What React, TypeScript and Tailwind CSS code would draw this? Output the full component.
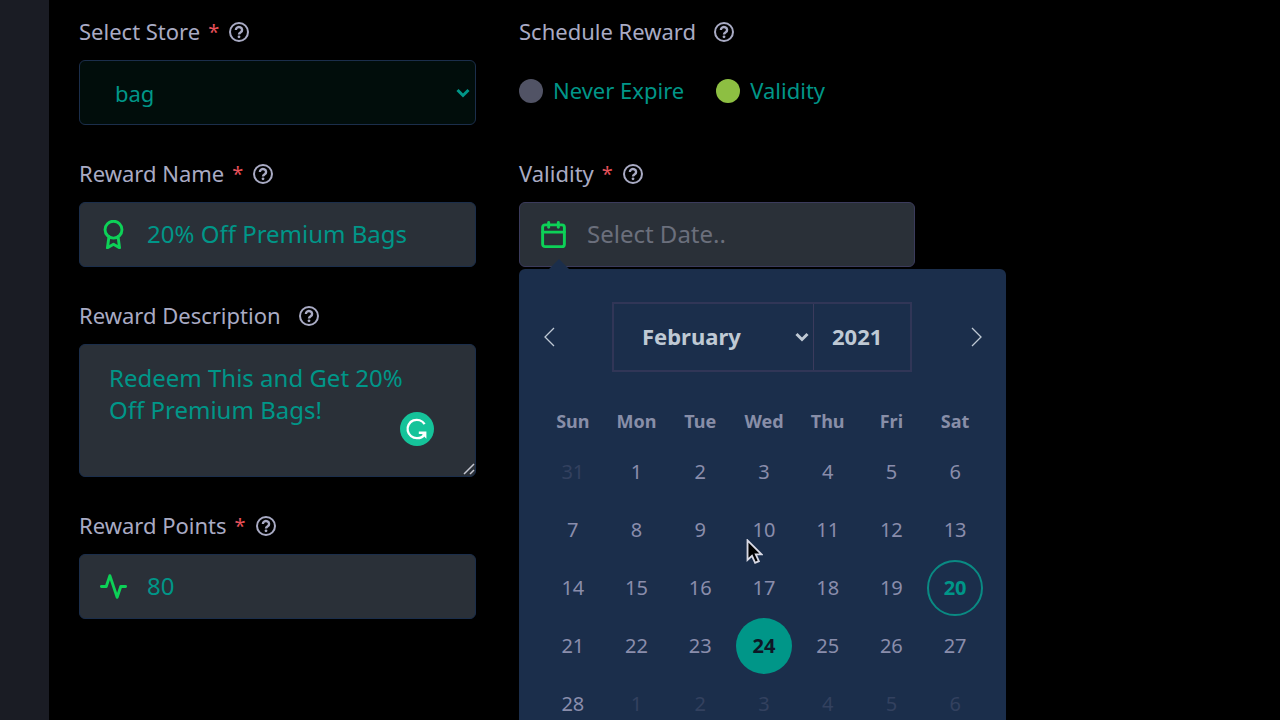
import { useState } from 'react';
import type { ReactNode } from 'react';
import { FiActivity, FiAward, FiCalendar } from 'react-icons/fi';

const months = [
  'January', 'February', 'March', 'April', 'May', 'June',
  'July', 'August', 'September', 'October', 'November', 'December',
];
const weekdays = ['Sun', 'Mon', 'Tue', 'Wed', 'Thu', 'Fri', 'Sat'];

const TODAY = new Date(2021, 1, 20).getTime();

function buildWeeks(year: number, month: number) {
  const offset = new Date(year, month, 1).getDay();
  const days = new Date(year, month + 1, 0).getDate();
  return Array.from({ length: Math.ceil((offset + days) / 7) }, (_, w) =>
    Array.from({ length: 7 }, (_, d) => new Date(year, month, 1 - offset + w * 7 + d))
  );
}

interface FieldLabelProps {
  htmlFor?: string;
  required?: boolean;
  children: ReactNode;
}

function HelpIcon() {
  return (
    <svg viewBox="0 0 24 24" fill="none" stroke="currentColor" className="size-6">
      <circle cx="12" cy="12" r="9" strokeWidth="2" />
      <path d="M8.9 10a3.1 2.8 0 1 1 4.8 2.2c-1.1.7-1.7 1.1-1.7 2.4" strokeWidth="2.4" />
      <circle cx="12" cy="16.8" r="1.4" fill="currentColor" stroke="none" />
    </svg>
  );
}

function FieldLabel({ htmlFor, required, children }: FieldLabelProps) {
  return (
    <div className="mb-3.5 flex h-7 items-center text-[22px] leading-7 text-[#a9abc4]">
      <label htmlFor={htmlFor} className={required ? 'mr-2 pb-0.5' : 'mr-4 pb-0.5'}>{children}</label>
      {required && <span className="mr-2 text-xl text-[#e7515a]">*</span>}
      <HelpIcon />
    </div>
  );
}

function Chevron({ className }: { className: string }) {
  return (
    <svg viewBox="0 0 14 10" fill="none" stroke="currentColor" strokeWidth="3" className={className}>
      <path d="M1.5 2 7 7.5 12.5 2" />
    </svg>
  );
}

function DatePicker() {
  const [year, setYear] = useState(2021);
  const [month, setMonth] = useState(1);
  const [selected, setSelected] = useState(new Date(2021, 1, 24).getTime());

  const move = (step: number) => {
    const next = new Date(year, month + step, 1);
    setYear(next.getFullYear());
    setMonth(next.getMonth());
  };

  const dayClass = (day: Date) => {
    if (day.getTime() === selected) return 'bg-[#009688] font-bold text-[#0e1726]';
    if (day.getTime() === TODAY) return 'border-2 border-[#0a8a83] font-bold text-[#009688]';
    if (day.getMonth() !== month) return 'text-[#33415f]';
    return 'text-[#8a8dab]';
  };

  // 28 February starts the last row, five rows in total
  const weeks = buildWeeks(year, month);

  return (
    <div className="absolute top-full left-0 z-10 mt-0.5 w-[487px] rounded-md bg-[#1b2e4b] pt-[33px] pr-[19px] pb-5 pl-[22px]">
      <span className="absolute -top-2.5 left-7 border-x-12 border-b-12 border-x-transparent border-b-[#1b2e4b]" />

      <div className="flex items-center justify-between pr-1">
        <button type="button" aria-label="Previous month" onClick={() => move(-1)} className="text-[#bfc9d4]">
          <svg viewBox="0 0 18 20" fill="none" stroke="currentColor" className="h-5 w-[18px]">
            <path d="M13 1 4 10l9 9" strokeWidth="1.3" />
          </svg>
        </button>

        <div className="flex h-[70px] border-2 border-[#3b3b5c]/70 text-[22px] font-bold text-[#bfc9d4]">
          <div className="relative">
            <select
              aria-label="Month"
              value={month}
              onChange={(e) => setMonth(Number(e.target.value))}
              className="h-full w-[199px] appearance-none bg-transparent pb-0.5 pl-7"
            >
              {months.map((name, i) => (
                <option key={name} value={i}>{name}</option>
              ))}
            </select>
            <Chevron className="pointer-events-none absolute top-7 right-1 h-2.5 w-3.5" />
          </div>
          <input
            aria-label="Year"
            value={year}
            onChange={(e) => setYear(Number(e.target.value) || 0)}
            className="w-[97px] border-l border-[#3b3b5c] bg-transparent pb-0.5 pl-[18px]"
          />
        </div>

        <button type="button" aria-label="Next month" onClick={() => move(1)} className="text-[#bfc9d4]">
          <svg viewBox="0 0 18 20" fill="none" stroke="currentColor" className="h-5 w-[18px]">
            <path d="m7 1 9 9-9 9" strokeWidth="1.3" />
          </svg>
        </button>
      </div>

      <table className="mt-[27px] w-full table-fixed text-center">
        <thead>
          <tr className="h-11 text-lg text-[#888ea8]">
            {weekdays.map((name) => (
              <th key={name} className="p-0 font-bold">{name}</th>
            ))}
          </tr>
        </thead>
        <tbody>
          {weeks.map((week) => (
            <tr key={week[0].getTime()} className="h-[58px] text-xl">
              {week.map((day) => (
                <td key={day.getTime()} className="p-0">
                  <button
                    type="button"
                    onClick={() => setSelected(day.getTime())}
                    className={`mx-auto flex size-14 items-center justify-center rounded-full leading-7 ${dayClass(day)}`}
                  >
                    {day.getDate()}
                  </button>
                </td>
              ))}
            </tr>
          ))}
        </tbody>
      </table>

      {/* mouse pointer */}
      <svg viewBox="0 0 18 28" className="pointer-events-none absolute top-[270px] left-[227px] h-[26px] w-[17px]">
        <path d="M1.5 1.5v21l4.8-4.4 3.4 7.6 4-1.8-3.3-7.4h6.2z" fill="#000" stroke="#d8d9e4" strokeWidth="2" />
      </svg>
    </div>
  );
}

export default function App() {
  const [name, setName] = useState('20% Off Premium Bags');
  const [description, setDescription] = useState('Redeem This and Get 20% Off Premium Bags!');
  const [points, setPoints] = useState('80');
  const [schedule, setSchedule] = useState('validity');

  const field = 'w-full rounded-md border border-[#1b2e4b] bg-[#2a3038] text-2xl text-[#009688] outline-none';
  const fieldIcon = 'absolute top-[18px] left-5 size-[29px] stroke-[2.4] text-[#0dd157]';
  const radio = 'size-6 appearance-none rounded-full bg-[#515365] checked:bg-[#8dbf42]';

  return (
    <div className="flex h-screen overflow-hidden bg-black font-['Noto_Sans',sans-serif]">
      <aside className="w-[49px] shrink-0 bg-[#1a1c24]" />

      <form className="flex flex-1 gap-[43px] pt-4.5 pr-8 pl-[30px]">
        <div className="flex max-w-[397px] flex-1 flex-col gap-[35px]">
          <div>
            <FieldLabel htmlFor="store" required>Select Store</FieldLabel>
            <div className="relative">
              <select
                id="store"
                className="h-[65px] w-full appearance-none rounded-md border border-[#1b2e4b] bg-[#010d0b] pt-0.5 pl-[35px] text-[22px] text-[#009688]"
              >
                <option>bag</option>
              </select>
              <Chevron className="pointer-events-none absolute top-7 right-1.5 h-2.5 w-3.5 text-[#009688]" />
            </div>
          </div>

          <div>
            <FieldLabel htmlFor="name" required>Reward Name</FieldLabel>
            <div className="relative">
              <FiAward className={fieldIcon} />
              <input
                id="name"
                value={name}
                onChange={(e) => setName(e.target.value)}
                className={`${field} h-[65px] pb-0.5 pl-[67px]`}
              />
            </div>
          </div>

          <div>
            <FieldLabel htmlFor="description">Reward Description</FieldLabel>
            <div className="relative">
              <textarea
                id="description"
                value={description}
                onChange={(e) => setDescription(e.target.value)}
                className={`${field} block h-[133px] resize-none py-[17px] pr-12 pl-[29px] leading-8`}
              />
              <svg viewBox="0 0 34 34" className="absolute right-[42px] bottom-[31px] size-[34px]">
                <circle cx="17" cy="17" r="17" fill="#15c39a" />
                <path
                  d="M24.6 12.2A9.2 9.2 0 1 0 17 26.2C20.4 26.2 23.4 24.6 25 21.6"
                  fill="none"
                  stroke="#fff"
                  strokeWidth="2.3"
                />
                <path d="M18.8 19.6h7.6v7.2l-2.4-2.6-2-2.3h-3.2z" fill="#fff" />
              </svg>
              <svg
                viewBox="0 0 12 12"
                stroke="#c4c6d0"
                strokeWidth="1.5"
                className="pointer-events-none absolute right-px bottom-0.5 size-3"
              >
                <path d="M1 11 11 1M7 11l4-4" />
              </svg>
            </div>
          </div>

          <div>
            <FieldLabel htmlFor="points" required>Reward Points</FieldLabel>
            <div className="relative">
              <FiActivity className={fieldIcon} />
              <input
                id="points"
                value={points}
                onChange={(e) => setPoints(e.target.value)}
                className={`${field} h-[65px] pb-0.5 pl-[67px]`}
              />
            </div>
          </div>
        </div>

        <div className="flex max-w-[396px] flex-1 flex-col gap-[35px]">
          <div>
            <FieldLabel>Schedule Reward</FieldLabel>
            <div className="flex h-[65px] items-center gap-8 pb-1 text-[22px] text-[#009688]">
              <label className="flex items-center gap-2.5">
                <input
                  type="radio"
                  name="schedule"
                  checked={schedule === 'never'}
                  onChange={() => setSchedule('never')}
                  className={radio}
                />
                Never Expire
              </label>
              <label className="flex items-center gap-2.5">
                <input
                  type="radio"
                  name="schedule"
                  checked={schedule === 'validity'}
                  onChange={() => setSchedule('validity')}
                  className={radio}
                />
                Validity
              </label>
            </div>
          </div>

          <div>
            <FieldLabel htmlFor="validity" required>Validity</FieldLabel>
            <div className="relative">
              <FiCalendar className={fieldIcon} />
              <input
                id="validity"
                placeholder="Select Date.."
                className="h-[65px] w-full rounded-md border border-[#3b3b5c] bg-[#2a3038] pb-0.5 pl-[67px] text-2xl text-[#009688] outline-none placeholder:text-[#6b6f7c]"
              />
              <DatePicker />
            </div>
          </div>
        </div>
      </form>
    </div>
  );
}
